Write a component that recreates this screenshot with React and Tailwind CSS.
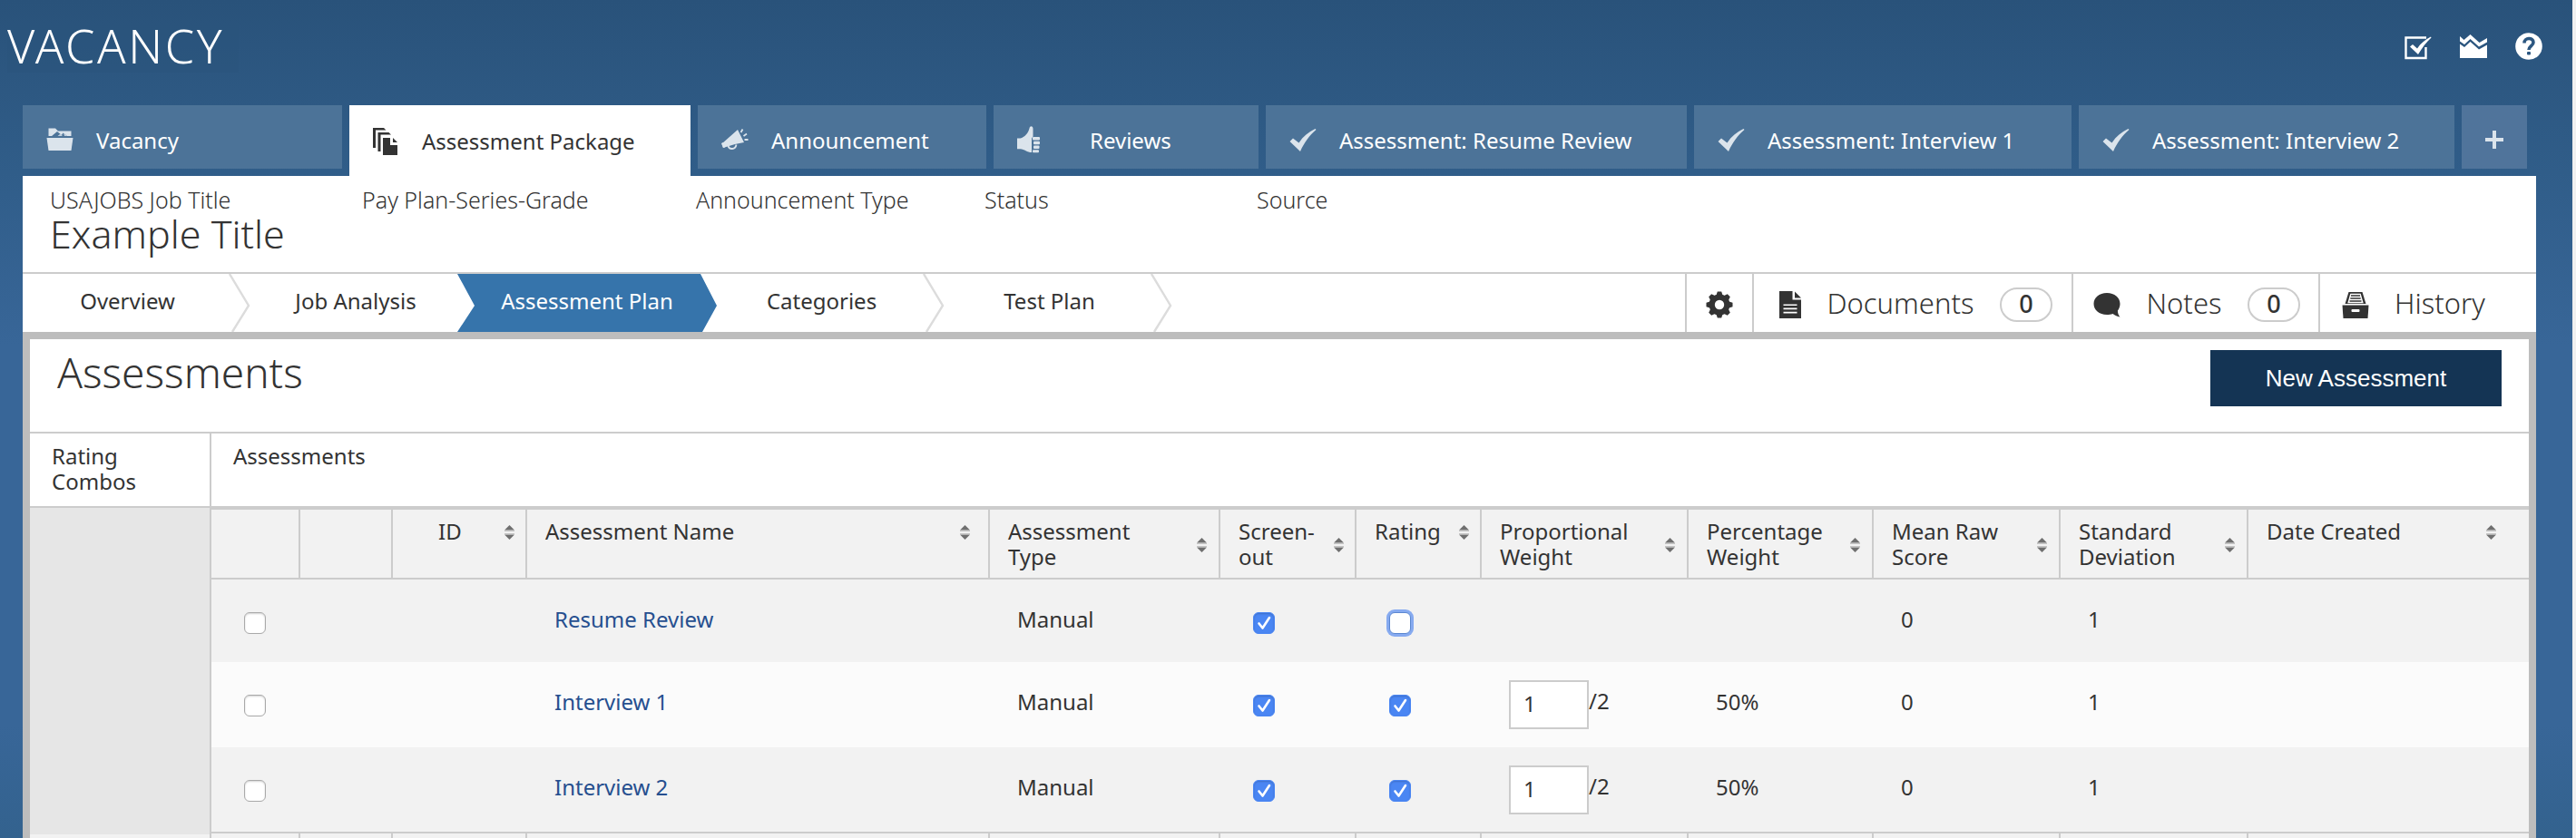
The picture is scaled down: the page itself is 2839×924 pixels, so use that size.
import React from "react";
import { clsx } from "clsx";

function FolderIcon() {
  return (
    <svg viewBox="0 0 30 26" className="h-[26px] w-[30px] shrink-0 fill-[#dbe4ec]" aria-hidden="true">
      <path d="M2.5 0.5h7.5l3 3h14.5v5.5h-4.500l-4.500-3.600-1.500 2.600-5-4-6 5h-3.500z" />
      <path d="M12.500 9l3-2.500 2.500 2.500zM20 9l-1-3 4 3z" opacity="0.8" />
      <path d="M0.500 11h29l-2 14h-25z" />
    </svg>
  );
}

function PagesIcon() {
  return (
    <svg viewBox="0 0 27 30" className="h-[30px] w-[27px] shrink-0 fill-[#333]" aria-hidden="true">
      <path d="M0 0h12l2.500 2.500H3V22H0z" />
      <path d="M5.500 5h12l2.500 2.500H8.500V26h-3z" />
      <path d="M11 11h8v8h8v11H11z" />
      <path d="M22 11l5 5h-5z" />
    </svg>
  );
}

function MegaphoneIcon() {
  return (
    <svg viewBox="0 0 30 24" className="h-6 w-[30px] shrink-0" aria-hidden="true">
      <path d="M18 1l7 14-10 2-13 4-1.500-4.500z" fill="#dbe4ec" />
      <path d="M0 16l2-1 2 5.500-2 .500z" fill="#dbe4ec" />
      <path d="M7.500 19c1 4 8 4.500 9-1.500" fill="none" stroke="#dbe4ec" strokeWidth="1.800" />
      <path d="M21.500 4L23.500 0.500M24.500 8L28 5.500M25.500 12H29.500" fill="none" stroke="#dbe4ec" strokeWidth="1.800" />
    </svg>
  );
}

function ThumbIcon() {
  return (
    <svg viewBox="0 0 25 30" className="h-[30px] w-[25px] shrink-0 fill-[#dbe4ec]" aria-hidden="true">
      <path d="M0 13.500h3.500C8 12.500 12.500 7.500 13.500 2.500 14-.500 17.500-.500 17.500 3v8.500l-1.500 2v15.500c-5 0-8-3.500-12.500-3.800H0z" />
      <rect x="17" y="12" width="8" height="3.500" rx="1" />
      <rect x="18" y="16.800" width="7" height="3.500" rx="1" />
      <rect x="18" y="21.500" width="6.500" height="3.500" rx="1" />
      <rect x="17" y="26.200" width="7" height="3" rx="1" />
    </svg>
  );
}

function CheckIcon() {
  return (
    <svg viewBox="0 0 30 25" className="h-[25px] w-[30px] shrink-0 fill-[#dbe4ec]" aria-hidden="true">
      <path d="M0.500 14L4 10.500l6.500 5C15 8.500 21 3.500 28.500 0l1 1C22 7.500 16.500 15 12 25z" />
    </svg>
  );
}

function PlusIcon() {
  return (
    <svg viewBox="0 0 20 20" className="size-5 fill-[#dbe4ec]" aria-hidden="true">
      <path d="M8 0h4v8h8v4h-8v8H8v-8H0V8h8z" />
    </svg>
  );
}

function CheckBoxIcon() {
  return (
    <svg viewBox="0 0 30 26" className="h-[26px] w-[30px]" aria-hidden="true">
      <path d="M24 1.500H1.500v22.500h22V12" fill="none" stroke="#fff" strokeWidth="2.400" />
      <path d="M6 11.500l3-2.500 5 4.500C18 7.500 23 3.500 29 0.500l.500 1C24 6.500 19.500 12.500 15 20z" fill="#fff" />
    </svg>
  );
}

function ChartIcon() {
  return (
    <svg viewBox="0 0 30 26" className="h-[26px] w-[30px] fill-white" aria-hidden="true">
      <path d="M0 2l4.500 4L11.500 0l10 9L30 4v4.500l-9 5L11.500 5l-6.500 6L0 7.500z" />
      <path d="M0 10.500l5 3.500 6.500-6L21 16.500l9-5V26H0z" />
    </svg>
  );
}

function HelpIcon() {
  return (
    <svg viewBox="0 0 30 30" className="size-[30px]" aria-hidden="true">
      <circle cx="15" cy="15" r="14.800" fill="#fff" />
      <path d="M10 11.500c0-6.500 10-6.500 10-.800 0 3.800-5 4-5 8.300" fill="none" stroke="#2c5781" strokeWidth="3.600" />
      <rect x="13" y="21" width="4" height="3.600" rx="1" fill="#2c5781" />
    </svg>
  );
}

function GearIcon() {
  return (
    <svg viewBox="0 0 30 30" className="mt-1 size-[30px]" aria-hidden="true">
      <g fill="#333">
        <circle cx="15" cy="15" r="11.500" />
        <path d="M12.800 0.500h4.400l1.300 4h-7zM12.800 29.500h4.400l1.300-4h-7zM0.500 12.800v4.400l4 1.300v-7zM29.500 12.800v4.400l-4 1.300v-7z" />
        <path d="M3.200 6.200l3-3 4.300 2-5.300 5.300zM26.800 6.200l-3-3-4.300 2 5.300 5.300zM3.200 23.800l3 3 4.300-2-5.300-5.300zM26.800 23.800l-3 3-4.300-2 5.300-5.300z" />
      </g>
      <circle cx="15" cy="15" r="5.200" fill="#fff" />
    </svg>
  );
}

function DocIcon() {
  return (
    <svg viewBox="0 0 24 30" className="mt-1 h-[30px] w-6" aria-hidden="true">
      <path d="M0 0h14.500v9.500H24V30H0z" fill="#333" />
      <path d="M17 0.500l7 7h-7z" fill="#333" />
      <path d="M4.500 15.200h15M4.500 19.400h15M4.500 23.600h15" stroke="#fff" strokeWidth="1.600" />
    </svg>
  );
}

function ChatIcon() {
  return (
    <svg viewBox="0 0 30 28" className="mt-1 h-7 w-[30px] fill-[#333]" aria-hidden="true">
      <path d="M15 1C6.500 1 .500 6.300.500 13S6.500 25 15 25c2.500 0 4.500-.300 6.500-1 2.500 2 5 3 8 3.500-1.800-2-2.600-4.500-2.600-7 1.600-2 2.600-4.600 2.600-7.500C29.500 6.300 23.500 1 15 1z" />
    </svg>
  );
}

function HistoryIcon() {
  return (
    <svg viewBox="0 0 30 30" className="mt-1 size-[30px]" aria-hidden="true">
      <path d="M7.500 1h15l4 13h-23z" fill="#333" />
      <path d="M9.300 2.800h11.400l3 10.500H6.300z" fill="#fff" />
      <path d="M10 5h10M9.300 8h11.400M8.500 11h13" stroke="#333" strokeWidth="1.700" />
      <path d="M0.500 15.500h29L28.500 30h-27z" fill="#333" />
      <rect x="10.500" y="20" width="9" height="3" rx="1" fill="#fff" />
    </svg>
  );
}

function SortIcon() {
  return (
    <svg viewBox="0 0 11 16" className="mt-[2px] h-4 w-[11px] shrink-0" aria-hidden="true">
      <path d="M5.500 0L11 5.500H0z" fill="#6f6f6f" />
      <path d="M0 6.500h11M0 9.500h11" stroke="#c4c4c4" />
      <path d="M5.500 16L11 10.500H0z" fill="#6f6f6f" />
    </svg>
  );
}

function StepDivider() {
  return (
    <svg viewBox="0 0 24 64" className="h-16 w-6 shrink-0" aria-hidden="true">
      <path d="M1 0L22 35 4 64" fill="none" stroke="#dcdcdc" strokeWidth="2.400" />
    </svg>
  );
}

const TABS = [
  { label: "Vacancy", icon: FolderIcon, width: "w-[352px]", gap: "gap-[25px]" },
  { label: "Assessment Package", icon: PagesIcon, width: "w-[376px]", gap: "gap-[27px]", active: true },
  { label: "Announcement", icon: MegaphoneIcon, width: "w-[318px]", gap: "gap-[25px]" },
  { label: "Reviews", icon: ThumbIcon, width: "w-[292px]", gap: "gap-[55px]" },
  { label: "Assessment: Resume Review", icon: CheckIcon, width: "w-[464px]", gap: "gap-[25px]" },
  { label: "Assessment: Interview 1", icon: CheckIcon, width: "w-[416px]", gap: "gap-[25px]" },
  { label: "Assessment: Interview 2", icon: CheckIcon, width: "w-[414px]", gap: "gap-[25px]" },
];

const FACTS = [
  { label: "USAJOBS Job Title", width: "w-[344px]", value: "Example Title" },
  { label: "Pay Plan-Series-Grade", width: "w-[368px]" },
  { label: "Announcement Type", width: "w-[318px]" },
  { label: "Status", width: "w-[300px]" },
  { label: "Source", width: "w-[200px]" },
];

const COLUMNS = [
  { label: "", width: "w-[97px]" },
  { label: "", width: "w-[102px]" },
  { label: "ID", width: "w-[148px]", pad: "pl-[50px] pr-3" },
  { label: "Assessment Name", width: "w-[510px]", pad: "pl-5 pr-5" },
  { label: "Assessment Type", width: "w-[254px]", pad: "pl-5 pr-[13px]", text: "w-40" },
  { label: "Screen-out", width: "w-[150px]", pad: "pl-5 pr-3", text: "w-24" },
  { label: "Rating", width: "w-[138px]", pad: "pl-5 pr-3" },
  { label: "Proportional Weight", width: "w-[228px]", pad: "pl-5 pr-[13px]", text: "w-40" },
  { label: "Percentage Weight", width: "w-[204px]", pad: "pl-5 pr-[13px]", text: "w-36" },
  { label: "Mean Raw Score", width: "w-[206px]", pad: "pl-5 pr-[13px]", text: "w-36" },
  { label: "Standard Deviation", width: "w-[207px]", pad: "pl-5 pr-[13px]", text: "w-32" },
  { label: "Date Created", width: "w-auto", pad: "pl-5 pr-9" },
];

const ROWS = [
  { name: "Resume Review", screenOut: true, rating: false, focus: true },
  { name: "Interview 1", screenOut: true, rating: true, weight: "1", percent: "50%" },
  { name: "Interview 2", screenOut: true, rating: true, weight: "1", percent: "50%" },
];

function Checkbox({ label, checked = false, focus = false }) {
  return (
    <span className="relative block size-6">
      <input
        type="checkbox"
        aria-label={label}
        defaultChecked={checked}
        className={clsx(
          "peer block size-6 appearance-none rounded-[6px] border bg-white checked:border-[#4a86f3] checked:bg-[#4a86f3]",
          focus
            ? "border-[#5b87d0] ring-3 ring-[#86aaf0]"
            : "border-[#a9a9a9] shadow-[inset_0_1px_2px_rgba(0,0,0,0.18)]"
        )}
      />
      <svg viewBox="0 0 24 24" className="pointer-events-none absolute inset-0 hidden size-6 peer-checked:block" aria-hidden="true">
        <path d="M6.500 12.500L10.500 17.500 18 6" fill="none" stroke="#fff" strokeWidth="2.600" strokeLinecap="round" strokeLinejoin="round" />
      </svg>
    </span>
  );
}

function Tab({ tab }) {
  const Icon = tab.icon;
  return (
    <a
      href="#"
      className={clsx(
        "flex items-center pl-[26px] text-2xl whitespace-nowrap",
        tab.width,
        tab.gap,
        tab.active ? "h-[78px] bg-white pt-[2px] text-[#333]" : "h-[70px] bg-[#4c7398] pt-[6px] text-white"
      )}
      aria-current={tab.active ? "page" : undefined}
    >
      <Icon />
      <span className={tab.active ? "" : "pt-[2px]"}>{tab.label}</span>
    </a>
  );
}

function Step({ label, width }) {
  return (
    <a href="#" className={clsx("flex h-16 items-center justify-center pb-1 pl-1 text-2xl", width)}>
      {label}
    </a>
  );
}

function ToolCell({ icon: Icon, label, count, className }) {
  return (
    <button type="button" className={clsx("flex h-16 items-center border-l-2 border-[#ccc]", className)}>
      <Icon />
      {label && <span className="text-[31px] leading-9 font-light">{label}</span>}
      {count !== undefined && (
        <span className="mt-1 flex h-[38px] w-[58px] items-center justify-center rounded-full border-2 border-[#ccc] pb-px text-[27px] font-medium">
          {count}
        </span>
      )}
    </button>
  );
}

function AssessmentTable() {
  return (
    <table className="w-full table-fixed border-collapse border-t-2 border-[#ccc] bg-[#f2f2f2] text-left text-2xl leading-7">
      <colgroup>
        {COLUMNS.map((c, i) => (
          <col key={i} className={c.width} />
        ))}
      </colgroup>
      <thead>
        <tr className="h-[77px] border-b-2 border-[#ccc]">
          {COLUMNS.map((c, i) => (
            <th key={i} scope="col" className="border-r-2 border-[#ccc] p-0 align-top font-normal last:border-r-0">
              {c.label && (
                <div className={clsx("flex items-center justify-between pt-[10px]", c.pad)}>
                  <span className={c.text}>{c.label}</span>
                  <SortIcon />
                </div>
              )}
            </th>
          ))}
        </tr>
      </thead>
      <tbody>
        {ROWS.map((r) => (
          <tr key={r.name} className="h-[94px] align-top first:h-[92px] even:bg-[#fbfbfb]">
            <td className="p-0 pt-9 pl-9"><Checkbox label={"Select " + r.name} /></td>
            <td />
            <td />
            <td className="p-0 pt-[30px] pl-[31px]">
              <a href="#" className="text-[#264f8f]">{r.name}</a>
            </td>
            <td className="p-0 pt-[30px] pl-[31px]">Manual</td>
            <td className="p-0 pt-9 pl-[37px]"><Checkbox label={r.name + " screen-out"} checked={r.screenOut} /></td>
            <td className="p-0 pt-9 pl-[37px]"><Checkbox label={r.name + " rating"} checked={r.rating} focus={r.focus} /></td>
            <td className="p-0 pt-5 pl-[31px]">
              {r.weight && (
                <div className="flex items-center">
                  <input
                    type="text"
                    defaultValue={r.weight}
                    aria-label={r.name + " proportional weight"}
                    className="h-[54px] w-[88px] border-2 border-[#ccc] bg-white pb-1 pl-[14px]"
                  />
                  <span className="pb-2">/2</span>
                </div>
              )}
            </td>
            <td className="p-0 pt-[30px] pl-[31px]">{r.percent}</td>
            <td className="p-0 pt-[30px] pl-[31px]">0</td>
            <td className="p-0 pt-[30px] pl-[31px]">1</td>
            <td />
          </tr>
        ))}
      </tbody>
      <tfoot>
        <tr className="h-10 border-t-2 border-[#ccc]">
          {COLUMNS.map((c, i) => (
            <td key={i} className="border-r-2 border-[#ccc] last:border-r-0" />
          ))}
        </tr>
      </tfoot>
    </table>
  );
}

export default function App() {
  return (
    <div className="h-screen overflow-hidden border-r-4 border-[#f0f0f0] bg-[linear-gradient(#29527a_0px,#2d5882_100px,#305d89_190px,#386698_380px,#386698_800px,#33628e_924px)] font-['Noto_Sans',sans-serif] text-[#333]">
      <header className="flex h-[116px] items-start justify-between pr-[33px] pl-2">
        <h1 className="mt-5 h-[60px] bg-[#2a537c]/50 pr-4 text-[52px] leading-[60px] font-light tracking-wider text-white">VACANCY</h1>
        <div className="mt-9 flex items-center gap-[31px]">
          <button type="button" aria-label="Tasks" className="pt-1"><CheckBoxIcon /></button>
          <button type="button" aria-label="Reports"><ChartIcon /></button>
          <button type="button" aria-label="Help"><HelpIcon /></button>
        </div>
      </header>

      <nav className="flex h-[78px] items-start gap-2 pl-[25px]">
        {TABS.map((t) => (
          <Tab key={t.label} tab={t} />
        ))}
        <button type="button" aria-label="Add tab" className="flex h-[70px] w-[72px] items-center justify-center bg-[#50749b] pt-[6px]">
          <PlusIcon />
        </button>
      </nav>

      <main className="mr-10 ml-[25px] bg-white">
        <dl className="flex h-[108px] border-b-2 border-[#ccc] pt-3 pl-[30px] font-light">
          {FACTS.map((f) => (
            <div key={f.label} className={f.width}>
              <dt className="text-[25px] leading-7">{f.label}</dt>
              {f.value && <dd className="text-[43px] leading-[48px]">{f.value}</dd>}
            </div>
          ))}
        </dl>

        <div className="flex h-16 justify-between">
          <nav className="flex">
            <Step label="Overview" width="w-[227px]" />
            <StepDivider />
            <Step label="Job Analysis" width="w-[228px]" />
            <a
              href="#"
              aria-current="step"
              className="flex h-16 w-[286px] items-center justify-center bg-[#3674ab] pb-1 text-2xl text-white [clip-path:polygon(0_0,268px_0,100%_35px,270px_100%,0_100%,19px_35px)]"
            >
              Assessment Plan
            </a>
            <Step label="Categories" width="w-[227px]" />
            <StepDivider />
            <Step label="Test Plan" width="w-[227px]" />
            <StepDivider />
          </nav>
          <div className="flex">
            <ToolCell icon={GearIcon} className="w-[74px] justify-center" />
            <ToolCell icon={DocIcon} label="Documents" count={0} className="w-[352px] justify-between pr-[21px] pl-7" />
            <ToolCell icon={ChatIcon} label="Notes" count={0} className="w-[272px] justify-between pr-5 pl-[22px]" />
            <ToolCell icon={HistoryIcon} label="History" className="w-[240px] gap-7 pl-6" />
          </div>
        </div>

        <section className="border-8 border-b-0 border-[#bdbdbd]">
          <div className="flex h-[104px] items-start justify-between border-b-2 border-[#ccc] pr-[30px] pl-[30px]">
            <h2 className="pt-1 text-[46px] leading-[64px] font-light">Assessments</h2>
            <button type="button" className="mt-3 h-[62px] w-[321px] bg-[#143454] font-['Liberation_Sans',sans-serif] text-[26px] text-white">
              New Assessment
            </button>
          </div>
          <div className="grid grid-cols-[200px_1fr]">
            <div className="h-[82px] border-r-2 border-b-2 border-[#ccc] pt-[11px] pl-6 text-2xl leading-7">
              Rating
              <br />
              Combos
            </div>
            <div className="h-[82px] border-b-2 border-[#ccc] pt-[11px] pl-6 text-2xl leading-7">Assessments</div>
            <div className="flex flex-col border-r-2 border-[#ccc]">
              <div className="h-[360px] bg-[#e6e6e6]" />
              <div className="flex-1 bg-[#f2f2f2]" />
            </div>
            <AssessmentTable />
          </div>
        </section>
      </main>
    </div>
  );
}
